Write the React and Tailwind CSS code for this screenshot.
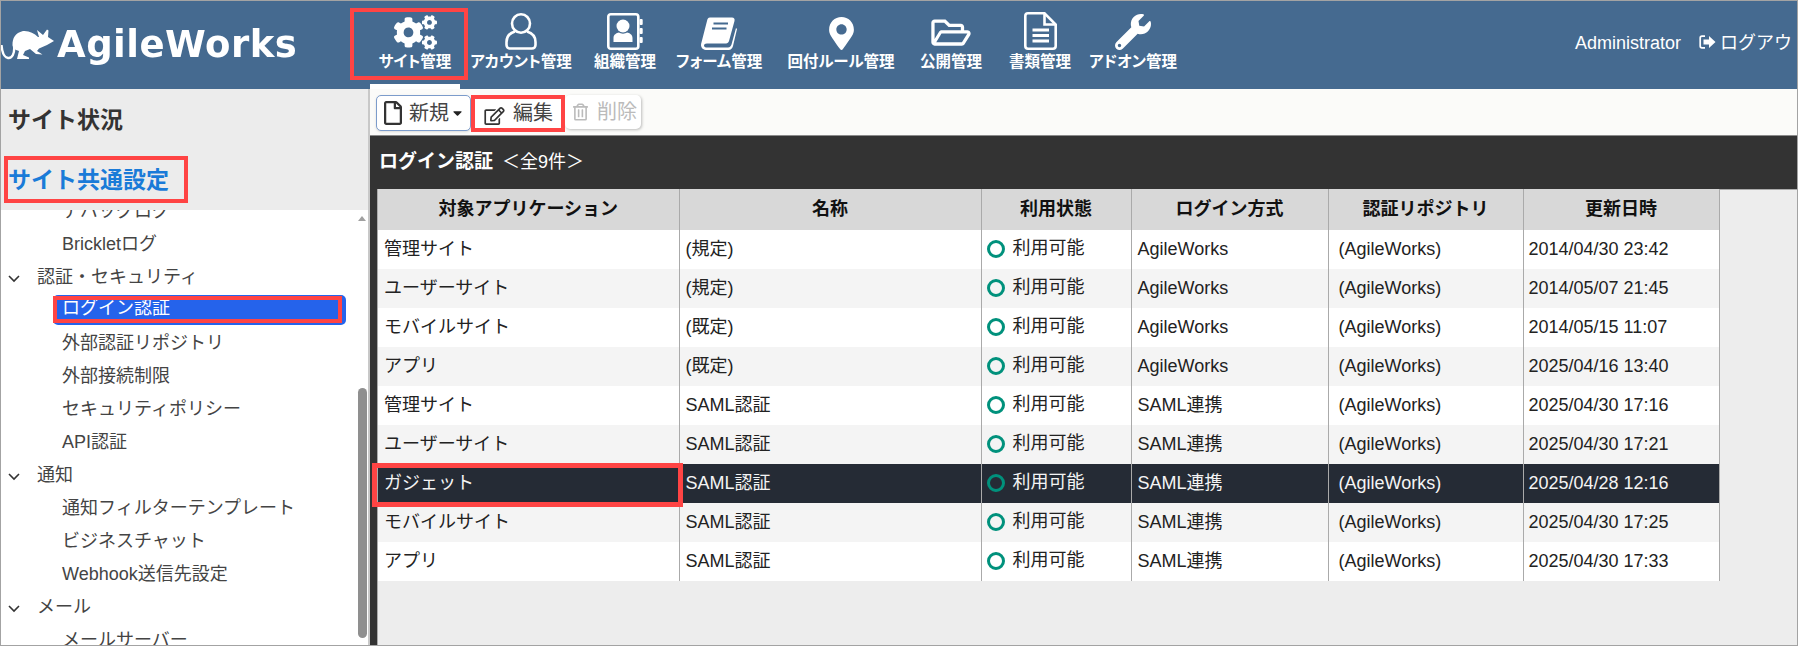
import React from "react";
import { FaCogs, FaMapMarkerAlt, FaRegFolderOpen, FaWrench, FaRegFile, FaRegEdit, FaRegTrashAlt, FaCaretDown } from "react-icons/fa";

const UserIcon = () => (
  <svg width="32" height="37" viewBox="0 0 32 37" fill="none" stroke="white" strokeWidth="2.6">
    <ellipse cx="16" cy="10.5" rx="9" ry="9.2" />
    <path d="M10 18.5 C5 20 1.5 23.5 1.5 29 V32 C1.5 34 3 35.5 5 35.5 H27 C29 35.5 30.5 34 30.5 32 V29 C30.5 23.5 27 20 22 18.5" />
  </svg>
);
const BookCard = () => (
  <svg width="36" height="37" viewBox="0 0 36 37">
    <rect x="1.3" y="1.3" width="30" height="34.4" rx="2.5" fill="none" stroke="white" strokeWidth="2.6" />
    <circle cx="16" cy="13" r="6.5" fill="white" />
    <path d="M6.5 29 V25 C6.5 21.5 9.5 20 12 19.5 C14 21 18 21 20 19.5 C22.5 20 25.5 21.5 25.5 25 V29 Z" fill="white" />
    <rect x="32.5" y="6" width="3.2" height="6" rx="1" fill="white" />
    <rect x="32.5" y="15" width="3.2" height="6" rx="1" fill="white" />
    <rect x="32.5" y="24" width="3.2" height="6" rx="1" fill="white" />
  </svg>
);
const BookIcon = () => (
  <svg width="36" height="33" viewBox="0 0 36 33">
    <path d="M9 0.5 H31 C33 0.5 34 2 33.5 4 L28 24 C27.5 25.5 26.5 26.5 25 26.5 H6 C3.5 26.5 3 28 3 28.5 C3 30 4.5 30.5 6 30.5 H27 C29 30.5 30 29 30.5 27.5 L35 11 L36 12 L32 29 C31.5 31 30 33 27.5 33 H6 C2.5 33 0 31 0 28 C0 27 0.3 26 0.6 25 L6 4 C6.5 2 7 0.5 9 0.5 Z" fill="white" />
    <path d="M12.5 6.5 H27 M11 11.5 H25.5" stroke="#456a90" strokeWidth="2.2" />
  </svg>
);
const FileIcon = () => (
  <svg width="33" height="38" viewBox="0 0 33 38" fill="none" stroke="white" strokeWidth="2.6">
    <path d="M20.5 1.3 H4 C2.4 1.3 1.3 2.4 1.3 4 V34 C1.3 35.6 2.4 36.7 4 36.7 H29 C30.6 36.7 31.7 35.6 31.7 34 V12.5 Z" />
    <path d="M20.5 1.5 V12.5 H31.5" />
    <path d="M8.5 18 H25 M8.5 23.5 H25 M8.5 29 H25" strokeWidth="2.8" />
  </svg>
);
const Bilby = () => (
  <svg width="54" height="34" viewBox="0 26 54 34" fill="white" className="blur-[0.4px] shrink-0">
    <path d="M11.5 44 C11.5 37 14 32 22 30 C28 29.5 33 32 37 36 L38 36 L36 29 L42 34 L46 28.5 L47.5 29.5 L47 36 L53 40 L46 44 L38 47.5 L36 50 L41.5 53.5 L35 53 L29 48 L24 50 L22 54 L28 56.5 L28 58 L16 58 L18 50 C15 49 12 48 11.5 44 Z" />
    <path d="M13 44 C14 53 11 57.5 7 57 C3 56.5 1 50 0.5 44" fill="none" stroke="white" strokeWidth="2.4" />
  </svg>
);
const LogoutIcon = () => (
  <svg width="17" height="14" viewBox="0 0 17 14">
    <path d="M6 1.2 H3 C2 1.2 1.2 2 1.2 3 V11 C1.2 12 2 12.8 3 12.8 H6" fill="none" stroke="white" strokeWidth="1.7" />
    <path d="M10 1 L16.5 7 L10 13 V9.5 H4.5 V4.5 H10 Z" fill="white" />
  </svg>
);

const nav = [
  { label: "サイト管理", w: "w-[90px]", active: true, icon: <FaCogs className="w-[43px] h-[35px]" /> },
  { label: "アカウント管理", w: "w-[122px]", icon: <UserIcon /> },
  { label: "組織管理", w: "w-[86px]", icon: <BookCard /> },
  { label: "フォーム管理", w: "w-[102px]", icon: <BookIcon /> },
  { label: "回付ルール管理", w: "w-[142px]", icon: <FaMapMarkerAlt className="w-[25px] h-[33px]" /> },
  { label: "公開管理", w: "w-[78px]", icon: <FaRegFolderOpen className="w-[44px] h-[35px]" /> },
  { label: "書類管理", w: "w-[100px]", icon: <FileIcon /> },
  { label: "アドオン管理", w: "w-[86px]", icon: <FaWrench className="w-[36px] h-[36px]" /> },
];

const tree = [
  { t: "デバッグログ" },
  { t: "Brickletログ" },
  { t: "認証・セキュリティ", p: true },
  { t: "ログイン認証", sel: true },
  { t: "外部認証リポジトリ" },
  { t: "外部接続制限" },
  { t: "セキュリティポリシー" },
  { t: "API認証" },
  { t: "通知", p: true },
  { t: "通知フィルターテンプレート" },
  { t: "ビジネスチャット" },
  { t: "Webhook送信先設定" },
  { t: "メール", p: true },
  { t: "メールサーバー" },
];

const rows = [
  ["管理サイト", "(規定)", "AgileWorks", "(AgileWorks)", "2014/04/30 23:42"],
  ["ユーザーサイト", "(規定)", "AgileWorks", "(AgileWorks)", "2014/05/07 21:45"],
  ["モバイルサイト", "(既定)", "AgileWorks", "(AgileWorks)", "2014/05/15 11:07"],
  ["アプリ", "(既定)", "AgileWorks", "(AgileWorks)", "2025/04/16 13:40"],
  ["管理サイト", "SAML認証", "SAML連携", "(AgileWorks)", "2025/04/30 17:16"],
  ["ユーザーサイト", "SAML認証", "SAML連携", "(AgileWorks)", "2025/04/30 17:21"],
  ["ガジェット", "SAML認証", "SAML連携", "(AgileWorks)", "2025/04/28 12:16"],
  ["モバイルサイト", "SAML認証", "SAML連携", "(AgileWorks)", "2025/04/30 17:25"],
  ["アプリ", "SAML認証", "SAML連携", "(AgileWorks)", "2025/04/30 17:33"],
];

const heads = ["対象アプリケーション", "名称", "利用状態", "ログイン方式", "認証リポジトリ", "更新日時"];

function rowBg(i) {
  if (i === 6) return "bg-[#252b35] text-[#f4f4f4]";
  if (i === 7 || i % 2 === 1) return "bg-[#f4f4f4] text-[#222]";
  return "bg-white text-[#222]";
}

export default function App() {
  return (
    <div className="relative w-[1798px] h-[646px] box-border border border-[#a3a3a3] overflow-hidden bg-[#ededed] text-[18px] font-['Liberation_Sans','Noto_Sans_CJK_JP',sans-serif]">
      <header className="flex h-[88px] bg-[#456a90] text-white">
        <div className="w-[369px] shrink-0 flex items-center pb-[2px] overflow-hidden">
          <Bilby />
          <span className="ml-[2px] text-[37px] font-bold tracking-[0.5px] leading-none blur-[0.5px] font-['DejaVu_Sans',sans-serif]">AgileWorks</span>
        </div>
        {nav.map((n) => (
          <div key={n.label} className={`${n.w} shrink-0 flex flex-col items-center border-b-[5px] ${n.active ? "border-white" : "border-transparent"}`}>
            <div className="h-[49px] flex items-end justify-center">{n.icon}</div>
            <div className="mt-[2px] text-[15.5px] leading-[20px] font-bold whitespace-nowrap [font-feature-settings:'palt']">{n.label}</div>
          </div>
        ))}
        <div className="ml-auto w-[227px] shrink-0 flex items-start pt-[30px] pl-[5px] overflow-hidden whitespace-nowrap">
          <span className="leading-[24px]">Administrator</span>
          <span className="ml-[18px] mt-[4px]"><LogoutIcon /></span>
          <span className="ml-[4px] leading-[24px]">ログアウト</span>
        </div>
      </header>

      <div className="flex h-[556px]">
        <aside className="w-[367px] shrink-0 flex flex-col">
          <div className="h-[121px] shrink-0 pl-[7px] pt-[17px] bg-[#ececec] font-bold text-[23px] leading-[28px]">
            <div className="text-[#333]">サイト状況</div>
            <div className="mt-[32px] text-[#1a7bd8]">サイト共通設定</div>
          </div>
          <div className="flex-1 min-h-0 flex bg-white text-[#444]">
            <div className="flex-1 overflow-hidden">
              <div className="-mt-[15px]">
                {tree.map((r) =>
                  r.sel ? (
                    <div key={r.t} className="h-[33px] pt-[1px]">
                      <div className="ml-[52px] w-[293px] h-[30px] rounded-[5px] bg-[#2563eb] text-white pl-[9px] leading-[27px]">{r.t}</div>
                    </div>
                  ) : r.p ? (
                    <div key={r.t} className="h-[33px] flex items-center pl-[7px]">
                      <svg width="12" height="8" viewBox="0 0 12 8" fill="none" stroke="#333" strokeWidth="1.6" className="mt-[3px]"><path d="M1 1 L6 6 L11 1" /></svg>
                      <span className="ml-[17px]">{r.t}</span>
                    </div>
                  ) : (
                    <div key={r.t} className="h-[33px] flex items-center pl-[61px] whitespace-nowrap">{r.t}</div>
                  )
                )}
              </div>
            </div>
            <div className="w-[14px] shrink-0 flex flex-col pl-[2px] pb-[7px]">
              <div className="mt-[6px] w-0 h-0 mx-auto border-x-[4.5px] border-x-transparent border-b-[5px] border-b-[#a0a0a0]" />
              <div className="mt-[167px] flex-1 w-[9px] mx-auto rounded-full bg-[#8f8f8f]" />
            </div>
          </div>
        </aside>
        <div className="w-[2px] shrink-0 bg-[#c8c8c8]" />
        <main className="flex-1 min-w-0 flex flex-col">
          <div className="h-[47px] shrink-0 box-border border-b border-[#8a8a8a] bg-[#fbfbf9] flex items-start pl-[6px] pt-[6px] text-[20px] text-[#444]">
            <button className="w-[95px] h-[36px] box-border flex items-center pl-[7px] bg-white border border-[#7c9ccb] rounded-[5px] shadow-sm">
              <FaRegFile className="w-[18px] h-[24px] text-[#333]" />
              <span className="ml-[7px]">新規</span>
              <FaCaretDown className="ml-[2px] w-[13px] h-[14px] text-[#222]" />
            </button>
            <button className="ml-[1px] w-[92px] h-[36px] flex items-center pl-[12px] bg-white">
              <FaRegEdit className="w-[21px] h-[18px] mt-[5px] text-[#333]" />
              <span className="ml-[8px]">編集</span>
            </button>
            <button className="ml-[1px] w-[76px] h-[34px] flex items-center pl-[8px] bg-white rounded-[5px] shadow-[1px_1px_3px_rgba(0,0,0,0.25)] text-[#bbb]">
              <FaRegTrashAlt className="w-[15px] h-[18px]" />
              <span className="ml-[9px]">削除</span>
            </button>
          </div>
          <div className="h-[53px] shrink-0 bg-[#333] text-white flex items-center pl-[9px]">
            <span className="font-bold text-[19px]">ログイン認証</span>
            <span className="ml-[9px] text-[18px]">＜全9件＞</span>
          </div>
          <div className="flex-1 min-h-0 flex">
            <div className="w-[7px] shrink-0 bg-[#333]" />
            <div className="flex-1 min-w-0 border-t border-l border-[#aaaaaa]">
              <table className="table-fixed w-[1341px] border-collapse -mt-px">
                <colgroup>
                  <col className="w-[301px]" />
                  <col className="w-[302px]" />
                  <col className="w-[150px]" />
                  <col className="w-[197px]" />
                  <col className="w-[195px]" />
                  <col className="w-[196px]" />
                </colgroup>
                <thead>
                  <tr className="h-[41px] bg-[#d8d8d8] text-[#111]">
                    {heads.map((h) => (
                      <th key={h} className="p-0 font-bold text-center border-r border-[#aaaaaa]">{h}</th>
                    ))}
                  </tr>
                </thead>
                <tbody>
                  {rows.map((r, i) => (
                    <tr key={i} className={`h-[39px] ${rowBg(i)}`}>
                      <td className="p-0 pl-[6px] pb-[1px] border-r border-[#aaaaaa]">{r[0]}</td>
                      <td className="p-0 pl-[6px] pb-[1px] border-r border-[#aaaaaa]">{r[1]}</td>
                      <td className="p-0 pl-[5px] border-r border-[#aaaaaa]">
                        <div className="flex items-center -mt-[2px]">
                          <span className="w-[18px] h-[18px] box-border rounded-full border-[3px] border-[#00917c]" />
                          <span className="ml-[8px]">利用可能</span>
                        </div>
                      </td>
                      <td className="p-0 pl-[6px] pb-[1px] border-r border-[#aaaaaa]">{r[2]}</td>
                      <td className="p-0 pl-[10px] pb-[1px] border-r border-[#aaaaaa]">{r[3]}</td>
                      <td className="p-0 pl-[5px] pb-[1px] border-r border-[#aaaaaa]">{r[4]}</td>
                    </tr>
                  ))}
                </tbody>
              </table>
            </div>
          </div>
        </main>
      </div>

      {/* red annotation frames drawn over the page */}
      <div className="absolute left-[349px] top-[7px] w-[118px] h-[72px] border-[4px] border-[#ff4444]" />
      <div className="absolute left-[3px] top-[155px] w-[184px] h-[47px] border-[4px] border-[#ff4444]" />
      <div className="absolute left-[52px] top-[295px] w-[289px] h-[27px] border-[4px] border-[#ff4444]" />
      <div className="absolute left-[470px] top-[94px] w-[94px] h-[37px] border-[4px] border-[#ff4444]" />
      <div className="absolute left-[371px] top-[462px] w-[311px] h-[44px] border-[5px] border-[#ff4444]" />
    </div>
  );
}
